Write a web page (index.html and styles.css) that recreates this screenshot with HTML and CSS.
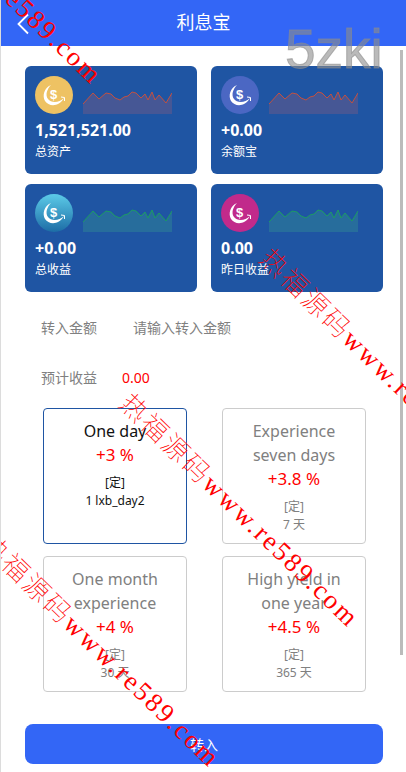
FILE: index.html
```html
<!DOCTYPE html>
<html lang="en">
<head>
    <meta charset="UTF-8">
    <meta name="viewport" content="width=device-width, initial-scale=1.0">
    <title>利息宝</title>
    <link rel="stylesheet" href="styles.css">
</head>
<body>

<svg width="0" height="0" class="defs">
    <defs>
        <symbol id="coin" viewBox="0 0 38 38">
            <path d="M16 9 C9 12 7 20 10 25 C14 31 24 31 29 22 C24 27 16 27 13 23 C10 19 12 13 16 9 Z" fill="#fff"/>
            <path d="M26 21 L29.5 21.5 L29.5 25" fill="none" stroke="#fff" stroke-width="1"/>
        </symbol>
        <symbol id="spark" viewBox="0 0 89 23" preserveAspectRatio="none">
            <path class="spark-fill" d="M0 13 L10 2 L16 8 L23 2 L28 3 L32 7 L37 9 L41 6 L45 5 L49 1 L53 2 L58 7 L62 3 L65 9 L69 1 L72 9 L76 4 L83 12 L89 2 V23 H0 Z"/>
            <path class="spark-line" d="M0 13 L10 2 L16 8 L23 2 L28 3 L32 7 L37 9 L41 6 L45 5 L49 1 L53 2 L58 7 L62 3 L65 9 L69 1 L72 9 L76 4 L83 12 L89 2"/>
        </symbol>
    </defs>
</svg>

<div class="page">
    <header class="top-bar">
        <svg class="back" width="14" height="22" viewBox="0 0 14 22"><path d="M12 1.5 L2.5 11 L12 20.5" fill="none" stroke="#fff" stroke-width="1.8"/></svg>
        <h1>利息宝</h1>
    </header>

    <main class="content">
        <section class="stats">
            <div class="stat">
                <div class="stat-top">
                    <span class="coin coin-yellow"><svg><use href="#coin"/></svg><b>$</b></span>
                    <svg class="spark spark-red"><use href="#spark"/></svg>
                </div>
                <div class="stat-num">1,521,521.00</div>
                <div class="stat-name">总资产</div>
            </div>
            <div class="stat">
                <div class="stat-top">
                    <span class="coin coin-indigo"><svg><use href="#coin"/></svg><b>$</b></span>
                    <svg class="spark spark-red"><use href="#spark"/></svg>
                </div>
                <div class="stat-num">+0.00</div>
                <div class="stat-name">余额宝</div>
            </div>
            <div class="stat">
                <div class="stat-top">
                    <span class="coin coin-cyan"><svg><use href="#coin"/></svg><b>$</b></span>
                    <svg class="spark spark-green"><use href="#spark"/></svg>
                </div>
                <div class="stat-num">+0.00</div>
                <div class="stat-name">总收益</div>
            </div>
            <div class="stat">
                <div class="stat-top">
                    <span class="coin coin-pink"><svg><use href="#coin"/></svg><b>$</b></span>
                    <svg class="spark spark-green"><use href="#spark"/></svg>
                </div>
                <div class="stat-num">0.00</div>
                <div class="stat-name">昨日收益</div>
            </div>
        </section>

        <div class="form-row">
            <label for="amount">转入金额</label>
            <input type="text" id="amount" placeholder="请输入转入金额">
        </div>
        <div class="form-row form-row-income">
            <label>预计收益</label>
            <span class="income">0.00</span>
        </div>

        <section class="plans">
            <div class="plan plan-active">
                <div class="plan-name">One day</div>
                <div class="plan-rate">+3 %</div>
                <div class="plan-type">[定]</div>
                <div class="plan-term">1 lxb_day2</div>
            </div>
            <div class="plan">
                <div class="plan-name">Experience seven days</div>
                <div class="plan-rate">+3.8 %</div>
                <div class="plan-type">[定]</div>
                <div class="plan-term">7 天</div>
            </div>
            <div class="plan">
                <div class="plan-name">One month experience</div>
                <div class="plan-rate">+4 %</div>
                <div class="plan-type">[定]</div>
                <div class="plan-term">30 天</div>
            </div>
            <div class="plan">
                <div class="plan-name">High yield in one year</div>
                <div class="plan-rate">+4.5 %</div>
                <div class="plan-type">[定]</div>
                <div class="plan-term">365 天</div>
            </div>
        </section>

        <button class="submit">转入</button>
    </main>

    <!-- things lying over the page -->
    <div class="scroll-thumb"></div>
    <div class="logo-mark">5zki</div>
    <div class="mark mark-1">热福源码www.re589.com</div>
    <div class="mark mark-2">热福源码www.re589.com</div>
    <div class="mark mark-3">热福源码www.re589.com</div>
    <div class="mark mark-4">热福源码www.re589.com</div>
</div>

</body>
</html>
```

FILE: styles.css
```css
html, body {
    margin: 0;
    padding: 0;
}

body {
    font-family: "Noto Sans", "Noto Sans CJK SC", sans-serif;
    background-color: #ffffff;
    color: #333;
}

.defs {
    position: absolute;
}

.page {
    position: relative;
    width: 406px;
    height: 772px;
    overflow: hidden;
    box-sizing: border-box;
    border-left: 1px solid #dcdcdc;
}

/* Top bar */
.top-bar {
    position: relative;
    height: 46px;
    background-color: #3366f6;
    display: flex;
    align-items: center;
    justify-content: center;
}

.top-bar h1 {
    margin: 0 0 4px;
    font-size: 18px;
    font-weight: 400;
    color: #ffffff;
}

.back {
    position: absolute;
    left: 15px;
    top: 13px;
}

.content {
    padding: 20px 0 0 24px;
}

/* Stat cards */
.stats {
    display: grid;
    grid-template-columns: 172px 172px;
    grid-auto-rows: 108px;
    gap: 10px 14px;
}

.stat {
    background-color: #1f55a3;
    border-radius: 6px;
    padding: 10px;
    color: #ffffff;
}

.stat-top {
    display: flex;
    align-items: flex-end;
    gap: 10px;
}

.coin {
    position: relative;
    width: 38px;
    height: 38px;
    border-radius: 50%;
    flex-shrink: 0;
}

.coin svg {
    width: 38px;
    height: 38px;
    display: block;
}

.coin b {
    position: absolute;
    left: 0;
    top: 9px;
    width: 37px;
    text-align: center;
    font-size: 13px;
    line-height: 19px;
    font-family: "Liberation Sans", sans-serif;
    color: #ffffff;
}

.coin-yellow { background-color: #eec263; }
.coin-indigo { background-color: #4b67c3; }
.coin-cyan { background: linear-gradient(#5ccbe8, #1d6da6); }
.coin-pink { background-color: #c12a8b; }

.spark {
    width: 89px;
    height: 23px;
    flex-shrink: 0;
}

.spark-fill {
    fill: var(--spark-fill);
}

.spark-line {
    fill: none;
    stroke: var(--spark-line);
    stroke-width: 1;
}

.spark-red {
    --spark-fill: #465795;
    --spark-line: #c4503f;
}

.spark-green {
    --spark-fill: #276d9c;
    --spark-line: #1c9c63;
}

.stat-num {
    margin-top: 6px;
    font-size: 16px;
    line-height: 20px;
    font-weight: 700;
}

.stat-name {
    margin-top: 3px;
    font-size: 12px;
    line-height: 18px;
}

/* Form rows */
.form-row {
    display: flex;
    align-items: center;
    height: 20px;
    margin-top: 25px;
    padding-left: 16px;
    font-size: 14px;
    color: #808080;
}

.form-row-income {
    margin-top: 30px;
}

.form-row label {
    width: 92px;
}

.form-row-income label {
    width: 81px;
}

.form-row input {
    border: none;
    padding: 0;
    outline: none;
    width: 180px;
    font-family: inherit;
    font-size: 14px;
}

.form-row input::placeholder {
    color: #808080;
    opacity: 1;
}

.income {
    color: #ff0000;
    font-size: 14px;
}

/* Plans */
.plans {
    display: grid;
    grid-template-columns: 144px 144px;
    grid-auto-rows: 136px;
    gap: 12px 35px;
    margin: 21px 0 0 18px;
}

.plan {
    box-sizing: border-box;
    border: 1px solid #cccccc;
    border-radius: 4px;
    padding: 10px 16px 0;
    text-align: center;
    color: #808080;
}

.plan-active {
    border-color: #1f55a3;
    color: #111111;
}

.plan-name {
    font-size: 16px;
    line-height: 24px;
}

.plan-rate {
    font-size: 17px;
    line-height: 24px;
    color: #ff0000;
    margin-bottom: 7px;
}

.plan-type, .plan-term {
    font-size: 12px;
    line-height: 18px;
}

.submit {
    display: block;
    width: 358px;
    height: 40px;
    margin-top: 32px;
    padding: 0;
    border: none;
    border-radius: 8px;
    background-color: #3366f6;
    color: #ffffff;
    font-family: inherit;
    font-size: 14px;
}

/* Overlays */
.scroll-thumb {
    position: absolute;
    left: 399px;
    top: 50px;
    width: 3px;
    height: 605px;
    background-color: #bbbbbb;
}

.logo-mark {
    position: absolute;
    left: 284px;
    top: 18px;
    font-family: "Liberation Sans", sans-serif;
    font-size: 55px;
    line-height: 62px;
    color: rgba(140, 140, 140, 0.6);
    -webkit-text-stroke: 1px rgba(140, 140, 140, 0.6);
}

.mark {
    position: absolute;
    white-space: nowrap;
    font-family: "Liberation Serif", "Noto Sans CJK SC", serif;
    font-size: 26.5px;
    font-weight: 100;
    letter-spacing: 2.4px;
    line-height: 28px;
    color: #ff0000;
    transform-origin: 0 50%;
    transform: rotate(44deg);
}

.mark-1 { left: -134px; top: -158px; }
.mark-2 { left: 263px; top: 240px; }
.mark-3 { left: 123px; top: 385px; }
.mark-4 { left: -16px; top: 525px; }
```
